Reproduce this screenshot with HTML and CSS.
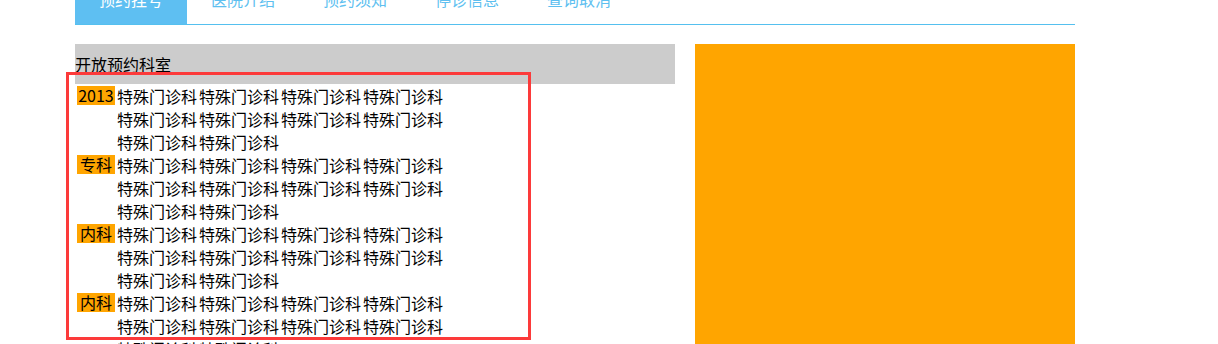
FILE: index.html
```html
<!DOCTYPE html>
<html lang="zh-CN">
<head>
    <meta charset="UTF-8">
    <title>预约挂号</title>
    <link rel="stylesheet" href="styles.css">
</head>
<body>
    <div class="wrap">
        <ul class="nav">
            <li class="active">预约挂号</li>
            <li>医院介绍</li>
            <li>预约须知</li>
            <li>停诊信息</li>
            <li>查询取消</li>
        </ul>

        <div class="main">
            <div class="depts">
                <h3 class="depts-title">开放预约科室</h3>
                <div class="dept-list">
                    <div class="dept">
                        <span class="tag">2013</span>
                        <div class="items">
                            <span>特殊门诊科</span><span>特殊门诊科</span><span>特殊门诊科</span><span>特殊门诊科</span><span>特殊门诊科</span>
                            <span>特殊门诊科</span><span>特殊门诊科</span><span>特殊门诊科</span><span>特殊门诊科</span><span>特殊门诊科</span>
                        </div>
                    </div>
                    <div class="dept">
                        <span class="tag">专科</span>
                        <div class="items">
                            <span>特殊门诊科</span><span>特殊门诊科</span><span>特殊门诊科</span><span>特殊门诊科</span><span>特殊门诊科</span>
                            <span>特殊门诊科</span><span>特殊门诊科</span><span>特殊门诊科</span><span>特殊门诊科</span><span>特殊门诊科</span>
                        </div>
                    </div>
                    <div class="dept">
                        <span class="tag">内科</span>
                        <div class="items">
                            <span>特殊门诊科</span><span>特殊门诊科</span><span>特殊门诊科</span><span>特殊门诊科</span><span>特殊门诊科</span>
                            <span>特殊门诊科</span><span>特殊门诊科</span><span>特殊门诊科</span><span>特殊门诊科</span><span>特殊门诊科</span>
                        </div>
                    </div>
                    <div class="dept">
                        <span class="tag">内科</span>
                        <div class="items">
                            <span>特殊门诊科</span><span>特殊门诊科</span><span>特殊门诊科</span><span>特殊门诊科</span><span>特殊门诊科</span>
                            <span>特殊门诊科</span><span>特殊门诊科</span><span>特殊门诊科</span><span>特殊门诊科</span><span>特殊门诊科</span>
                        </div>
                    </div>
                </div>
                <div class="highlight"></div>
            </div>
            <div class="side"></div>
        </div>
    </div>
</body>
</html>
```

FILE: styles.css
```css
body {
    margin: 0;
    font-family: "Microsoft YaHei", "Noto Sans CJK SC", "Noto Sans", sans-serif;
    font-size: 16px;
    color: #000;
    background: #fff;
    overflow: hidden;
}

.wrap {
    width: 1000px;
    margin: -26px 0 0 75px;
}

.nav {
    display: flex;
    margin: 0;
    padding: 0;
    list-style: none;
    border-bottom: 1px solid #55c0ef;
}

.nav li {
    width: 112px;
    height: 50px;
    line-height: 50px;
    text-align: center;
    color: #5ebff0;
}

.nav li.active {
    background: #5ebff2;
    color: #fff;
}

.main {
    display: flex;
    gap: 20px;
    margin-top: 19px;
}

.depts {
    width: 600px;
    position: relative;
}

.depts-title {
    margin: 0;
    height: 40px;
    padding-top: 10px;
    box-sizing: border-box;
    line-height: 20px;
    font-size: 16px;
    font-weight: normal;
    background: #ccc;
}

.dept-list {
    padding-top: 1px;
}

.dept {
    display: flex;
    align-items: flex-start;
}

.tag {
    flex-shrink: 0;
    width: 38px;
    height: 19px;
    line-height: 19px;
    margin: 1px 2px 0 2px;
    text-align: center;
    background: #ffa500;
}

.items {
    display: flex;
    flex-wrap: wrap;
    column-gap: 2px;
    width: 340px;
    line-height: 23px;
}

.items span {
    width: 80px;
    white-space: nowrap;
}

.highlight {
    position: absolute;
    left: -9px;
    top: 28px;
    width: 465px;
    height: 268px;
    box-sizing: border-box;
    border: 3px solid #fc3a3a;
    pointer-events: none;
}

.side {
    width: 380px;
    height: 320px;
    background: #ffa500;
}
```
